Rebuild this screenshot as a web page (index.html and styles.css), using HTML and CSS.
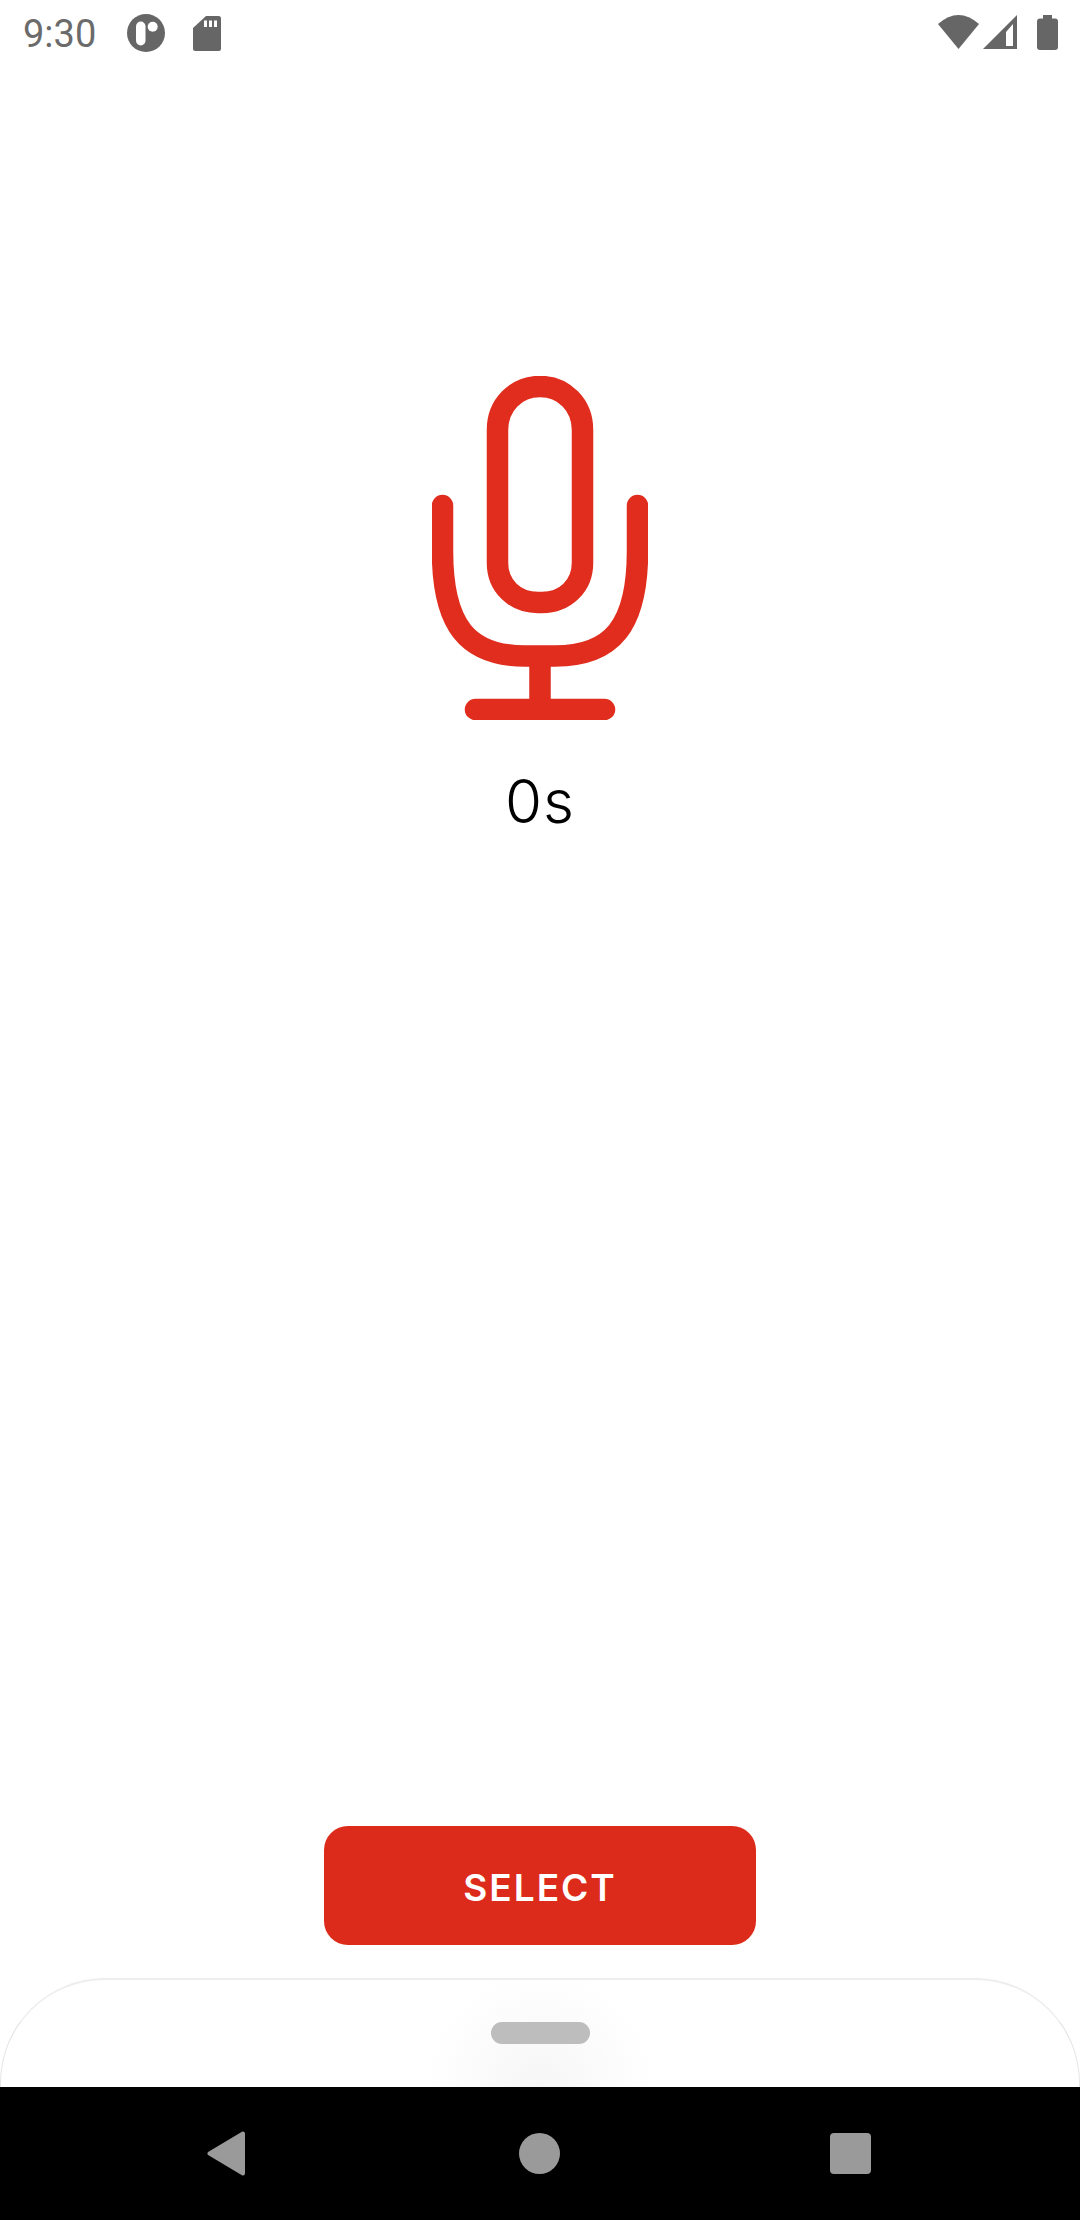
FILE: index.html
```html
<!DOCTYPE html>
<html lang="en">
  <head>
    <meta charset="UTF-8" />
    <meta name="viewport" content="width=device-width, initial-scale=1.0" />
    <title>Recorder</title>
    <link rel="stylesheet" href="styles.css">
  </head>
  <body>
    <div class="screen">
      <div class="status-bar">
        <span class="time">9:30</span>
        <svg class="app-badge" viewBox="0 0 38 38">
          <circle cx="19" cy="19" r="19" fill="#666" />
          <rect x="9" y="7.500" width="9.500" height="24" rx="4.750" fill="#fff" />
          <circle cx="25.700" cy="12.700" r="5" fill="#fff" />
        </svg>
        <svg class="sd-card" viewBox="0 0 28 35">
          <path d="M13 0H25.500Q28 0 28 2.500V32.500Q28 35 25.500 35H2.500Q0 35 0 32.500V12Z" fill="#666" />
          <path d="M11 4.500h3v6.500h-3zM16 4.500h3v6.500h-3zM21 4.500h3v6.500h-3z" fill="#fff" />
        </svg>
        <div class="status-right">
          <svg class="wifi" viewBox="0 0 41 34">
            <path d="M0 9Q20.500 -9 41 9L20.500 34Z" fill="#666" />
          </svg>
          <svg class="signal" viewBox="0 0 34 34">
            <path d="M0 34L34 0V34Z" fill="#666" />
            <path d="M30 9L23 17V31H30Z" fill="#fff" />
          </svg>
          <svg class="battery" viewBox="0 0 21 35">
            <path d="M6 0H15V3.500H18Q21 3.500 21 6.500V32Q21 35 18 35H3Q0 35 0 32V6.500Q0 3.500 3 3.500H6Z" fill="#666" />
          </svg>
        </div>
      </div>

      <div class="recorder">
        <svg class="mic" viewBox="0 0 216 344">
          <g fill="none" stroke="#e02d1e" stroke-width="21.500" stroke-linecap="round">
            <path d="M65.500 54C65.500 29 84 10.500 108 10.500C132 10.500 150.500 29 150.500 54V187C150.500 210 133 226.500 110 226.500H106C83 226.500 65.500 210 65.500 187Z" />
            <path d="M10.500 129.500V175C10.500 250 36 280 93 280H123C180 280 205.500 250 205.500 175V129.500" />
            <path d="M108 280V333" stroke-linecap="butt" />
            <path d="M43.500 333.500H172.500" />
          </g>
        </svg>
        <p class="duration">0s</p>
      </div>

      <button class="select-btn">SELECT</button>

      <div class="sheet">
        <div class="handle"></div>
      </div>

      <div class="nav-bar">
        <svg class="nav-back" viewBox="0 0 39 45">
          <path d="M36 2.500V42.500L2.500 22.500Z" fill="#9a9a9a" stroke="#9a9a9a" stroke-width="4" stroke-linejoin="round" />
        </svg>
        <div class="nav-home"></div>
        <div class="nav-recent"></div>
      </div>
    </div>
  </body>
</html>
```

FILE: styles.css
```css
* {
  margin: 0;
  padding: 0;
  box-sizing: border-box;
}
body {
  background: #fff;
  font-family: "Inter", sans-serif;
  overflow: hidden;
}
.screen {
  width: 1080px;
  height: 2220px;
  display: flex;
  flex-direction: column;
}

/* status bar */
.status-bar {
  height: 66px;
  display: flex;
  align-items: flex-start;
  padding: 14px 22px 0 23px;
}
.time {
  font-family: "Roboto", sans-serif;
  font-size: 38px;
  line-height: 38px;
  margin-top: 1px;
  color: #6b6b6b;
  width: 104px;
}
.app-badge {
  width: 38px;
  height: 38px;
}
.sd-card {
  width: 28px;
  height: 35px;
  margin: 2px 0 0 28px;
}
.status-right {
  margin-left: auto;
  display: flex;
  align-items: flex-start;
}
.wifi {
  width: 41px;
  height: 34px;
  margin-top: 1px;
}
.signal {
  width: 34px;
  height: 34px;
  margin: 1px 0 0 4px;
}
.battery {
  width: 21px;
  height: 35px;
  margin: 1px 0 0 20px;
}

/* mic + timer */
.recorder {
  margin-top: 310px;
  display: flex;
  flex-direction: column;
  align-items: center;
}
.mic {
  width: 216px;
  height: 344px;
}
.duration {
  margin-top: 47px;
  font-size: 60px;
  line-height: 68px;
  font-weight: 300;
  letter-spacing: 1px;
  color: #000;
}

.select-btn {
  align-self: center;
  width: 432px;
  height: 119px;
  margin-top: auto;
  padding-top: 4px;
  border: 0;
  border-radius: 24px;
  background: #dd2b1b;
  color: #fff;
  font-family: "Inter", sans-serif;
  font-size: 37px;
  font-weight: 600;
  letter-spacing: 2px;
}

/* bottom sheet */
.sheet {
  height: 109px;
  margin-top: 33px;
  display: flex;
  justify-content: center;
  padding-top: 42px;
  border: 1px solid #e6e6e6;
  border-top: 2px solid #eee;
  border-bottom: 0;
  border-radius: 105px 105px 0 0;
  background: radial-gradient(circle 115px at 50% 100%, #f6f6f6, #fff);
}
.handle {
  width: 99px;
  height: 22px;
  border-radius: 11px;
  background: #bdbdbd;
}

/* nav bar */
.nav-bar {
  height: 133px;
  background: #000;
  display: flex;
  align-items: center;
  padding-left: 207px;
}
.nav-back {
  width: 39px;
  height: 45px;
}
.nav-home {
  width: 41px;
  height: 41px;
  margin-left: 273px;
  border-radius: 50%;
  background: #9a9a9a;
}
.nav-recent {
  width: 41px;
  height: 41px;
  margin-left: 270px;
  border-radius: 4px;
  background: #9a9a9a;
}
```
